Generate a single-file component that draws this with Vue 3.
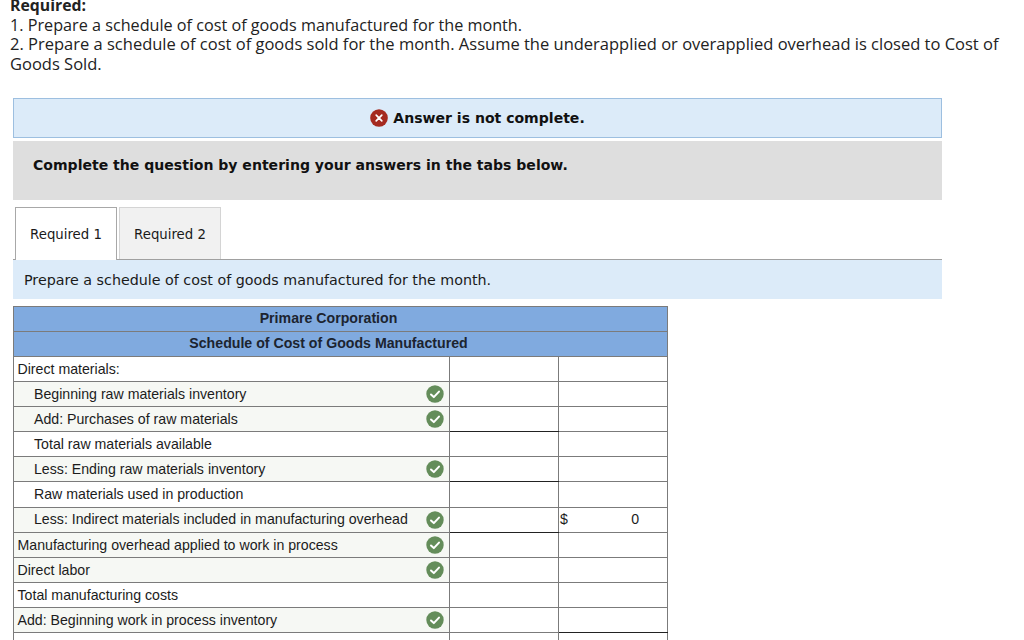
<script setup>
const rows = [
  { label: 'Direct materials:' },
  { label: 'Beginning raw materials inventory', indent: true, ok: true },
  { label: 'Add: Purchases of raw materials', indent: true, ok: true, rule: 'mid' },
  { label: 'Total raw materials available', indent: true },
  { label: 'Less: Ending raw materials inventory', indent: true, ok: true, rule: 'mid' },
  { label: 'Raw materials used in production', indent: true },
  { label: 'Less: Indirect materials included in manufacturing overhead', indent: true, ok: true, rule: 'mid', total: '0' },
  { label: 'Manufacturing overhead applied to work in process', ok: true },
  { label: 'Direct labor', ok: true },
  { label: 'Total manufacturing costs' },
  { label: 'Add: Beginning work in process inventory', ok: true, rule: 'last' },
  { label: '', plain: '0' },
]
</script>

<template>
  <main class="page">
    <section class="intro">
      <strong>Required:</strong>
      <p class="first">1. Prepare a schedule of cost of goods manufactured for the month.</p>
      <p class="second">2. Prepare a schedule of cost of goods sold for the month. Assume the underapplied or overapplied overhead is closed to Cost of Goods Sold.</p>
    </section>

    <div class="column">
      <div class="notice">
        <svg class="icon" viewBox="0 0 18 18" width="18" height="18">
          <circle cx="9" cy="9" r="8.8" fill="#a52a20" />
          <path d="M6.2 6.2l5.6 5.6M11.8 6.2l-5.6 5.6" stroke="#fff" stroke-width="1.7" stroke-linecap="round" />
        </svg>
        <b>Answer is not complete.</b>
      </div>

      <div class="instruction"><b>Complete the question by entering your answers in the tabs below.</b></div>

      <nav class="tabs">
        <span class="tab active">Required 1</span>
        <span class="tab">Required 2</span>
      </nav>

      <div class="prompt">Prepare a schedule of cost of goods manufactured for the month.</div>

      <table class="schedule">
        <colgroup>
          <col class="c-label" />
          <col class="c-num" />
          <col class="c-num" />
        </colgroup>
        <thead>
          <tr><th colspan="3">Primare Corporation</th></tr>
          <tr><th colspan="3">Schedule of Cost of Goods Manufactured</th></tr>
        </thead>
        <tbody>
          <tr v-for="row in rows" :key="row.label">
            <td class="label" :class="{ indent: row.indent, checked: row.ok }">
              <span>{{ row.label }}</span>
              <svg v-if="row.ok" class="check" viewBox="0 0 18 18" width="18" height="18">
                <circle cx="9" cy="9" r="8.7" fill="#648d5a" />
                <path d="M5 9.5l2.8 2.6L13 6.6" fill="none" stroke="#fff" stroke-width="2" stroke-linecap="round" stroke-linejoin="round" />
              </svg>
            </td>
            <td :class="{ dark: row.rule === 'mid' }"></td>
            <td :class="{ dark: row.rule === 'last' }">
              <div v-if="row.total" class="money"><span>$</span><span>{{ row.total }}</span></div>
              <div v-else-if="row.plain" class="money"><span></span><span>{{ row.plain }}</span></div>
            </td>
          </tr>
        </tbody>
      </table>
    </div>
  </main>
</template>

<style scoped>
.page { height: 640px; overflow: hidden; color: #222; font-family: "Open Sans", Lato, sans-serif; }
.intro { padding: 0 20px 0 10px; margin-top: -4px; font-size: 16.5px; line-height: 19.7px; }
.intro strong { display: block; font-weight: 700; font-size: 15.8px; }
.intro p { margin: 0; }
.intro .first { font-size: 16.2px; }
.intro .second { margin-top: -1px; }
.column { width: 929px; margin: 24px 0 0 13px; }
.notice { height: 40px; box-sizing: border-box; background: #dcebf9; border: 1px solid #9dbfe0; display: flex; align-items: center; justify-content: center; gap: 5px; font-family: "DejaVu Sans", Verdana, sans-serif; font-size: 14.05px; color: #111; }
.icon { flex: none; }
.instruction { height: 59px; margin-top: 3px; box-sizing: border-box; padding: 16px 20px 0; background: #dedede; font-family: "DejaVu Sans", Verdana, sans-serif; font-size: 14.05px; color: #111; }
.tabs { display: flex; gap: 2px; padding: 7px 0 0 2px; }
.tab { width: 102px; height: 52px; box-sizing: border-box; padding-top: 19px; text-align: center; background: #f1f1f1; border: 1px solid #d4d4d4; border-bottom: 0; font-family: "DejaVu Sans", Verdana, sans-serif; font-size: 13.3px; color: #1a1a1a; }
.tab.active { background: #fff; border-color: #a8a8a8; height: 53px; margin-bottom: -1px; position: relative; }
.prompt { height: 40px; box-sizing: border-box; padding: 12px 11px 0; background: #dcebf9; border-top: 1px solid #a0a0a0; font-family: "DejaVu Sans", Verdana, sans-serif; font-size: 14.28px; color: #1a1a1a; }
.schedule { width: 654px; margin-top: 7px; border-collapse: collapse; table-layout: fixed; font-family: "Liberation Sans", Arial, sans-serif; font-size: 14.17px; color: #1c1c1c; }
.c-label { width: 436px; }
.c-num { width: 109px; }
.schedule tr { height: 25.1px; }
th, td { border: 1px solid #7b7b7b; padding: 0 0 1px; }
th { background: #80aadf; font-weight: 700; text-align: center; color: #1c2430; padding-right: 24px; }
td.label { padding: 0 3px 1px 3.5px; white-space: nowrap; }
td.label span { vertical-align: middle; }
td.indent { padding-left: 20px; }
td.checked { background: #f6f8f4; position: relative; }
.check { position: absolute; right: 5.5px; top: 3px; }
td.dark { border-bottom-color: #222; }
.money { display: flex; justify-content: space-between; padding: 0 28px 0 1px; }
</style>

<style>
html, body { overflow: hidden; background: #fff; }
</style>
